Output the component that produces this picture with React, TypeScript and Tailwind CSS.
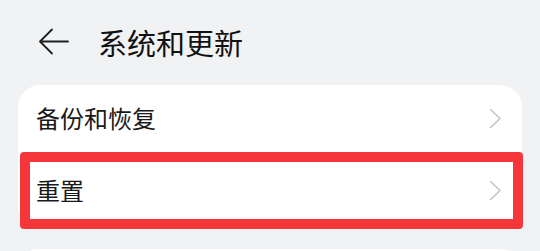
const font = { fontFamily: '"Noto Sans CJK SC", "Noto Sans", sans-serif' };

function Chevron() {
  return (
    <svg width="13" height="21" viewBox="0 0 13 21" fill="none">
      <path d="M1.5 1.5 L11 10.5 L1.5 19.5" stroke="#c4c4c6" strokeWidth="1.6" strokeLinecap="round" strokeLinejoin="round" />
    </svg>
  );
}

function Row({ label, height, highlight }: { label: string; height: string; highlight?: boolean }) {
  return (
    <div className={`relative flex items-center justify-between pl-[18px] pr-[20px] ${height}`}>
      <span className="text-[24px] leading-none text-[#191919]">{label}</span>
      <Chevron />
      {highlight && (
        <div className="absolute left-[2px] right-[-1px] top-[1px] bottom-0 rounded-[4px] border-[10px] border-[#f5363a]" />
      )}
    </div>
  );
}

export default function App() {
  return (
    <div className="h-[251px] w-[540px] overflow-hidden bg-[#f1f2f4]" style={font}>
      <div className="flex h-[85px] items-center pl-[38px]">
        <svg width="31" height="27" viewBox="0 0 31 27" fill="none" className="mt-[-2px]">
          <path d="M14 1.5 L2 13.5 L14 25.5 M2 13.5 H30" stroke="#1f1f1f" strokeWidth="1.8" strokeLinecap="round" strokeLinejoin="round" />
        </svg>
        <h1 className="ml-[29px] text-[29px] font-normal leading-none text-[#111111]">系统和更新</h1>
      </div>
      <div className="mx-[18px] rounded-[22px] bg-white">
        <Row label="备份和恢复" height="h-[66px]" />
        <Row label="重置" height="h-[78px]" highlight />
      </div>
      <div className="mx-[18px] mt-[20px] h-[40px] rounded-[22px] bg-white" />
    </div>
  );
}
